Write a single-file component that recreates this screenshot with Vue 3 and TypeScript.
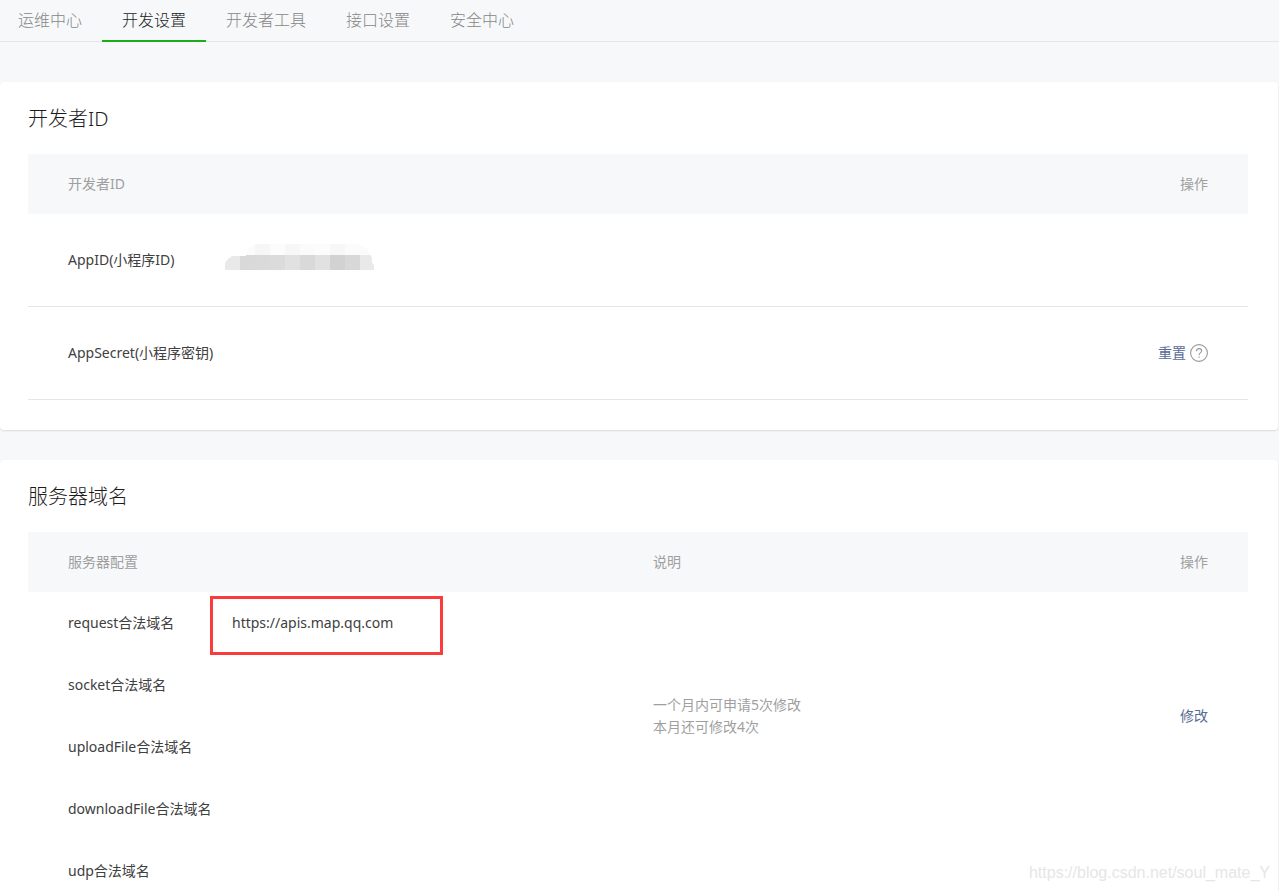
<script setup lang="ts">
import { ref } from 'vue'

interface DomainRow {
  label: string
  value: string
  marked?: boolean
}

interface MaskCell {
  x: number
  fill: string
}

const tabs: string[] = ['运维中心', '开发设置', '开发者工具', '接口设置', '安全中心']
const activeTab = ref<string>('开发设置')

const domains: DomainRow[] = [
  { label: 'request合法域名', value: 'https://apis.map.qq.com', marked: true },
  { label: 'socket合法域名', value: '' },
  { label: 'uploadFile合法域名', value: '' },
  { label: 'downloadFile合法域名', value: '' },
  { label: 'udp合法域名', value: '' },
]

const NOTE_SPAN = 4

const upperCells: MaskCell[] = [
  '#fbfbfb', '#f6f6f6', '#fcfcfc', '#f7f7f7', '#fbfbfb', '#fcfcfc', '#f7f7f7', '#fbfbfb', '#fbfbfb',
].map((fill, i) => ({ x: 15 + i * 15, fill }))

const lowerCells: MaskCell[] = [
  '#e9e9e9', '#d9d9d9', '#dadada', '#dbdbdb', '#e1e1e1', '#d9d9d9', '#e1e1e1', '#d2d2d2', '#d8d8d8', '#e9e9e9',
].map((fill, i) => ({ x: i * 15, fill }))
</script>

<template>
  <div class="page">
    <nav class="tabs">
      <a
        v-for="tab in tabs"
        :key="tab"
        href="#"
        class="tab"
        :class="{ active: tab === activeTab }"
        @click.prevent="activeTab = tab"
      >{{ tab }}</a>
    </nav>

    <main class="content">
      <section class="card">
        <h2 class="title">开发者ID</h2>
        <table class="grid ids">
          <colgroup>
            <col class="c-id" />
            <col />
            <col class="c-op" />
          </colgroup>
          <thead>
            <tr>
              <th colspan="2">开发者ID</th>
              <th class="op">操作</th>
            </tr>
          </thead>
          <tbody>
            <tr>
              <td>AppID(小程序ID)</td>
              <td class="value">
                <svg class="mask" width="149" height="26" viewBox="0 0 149 26" aria-hidden="true">
                  <defs>
                    <clipPath id="mask-shape">
                      <path d="M0 26V19L3 15L7 12H21V9L24 4L30 0H134L141 4L145 9L147 15V19L149 21V26H2Z" />
                    </clipPath>
                  </defs>
                  <g clip-path="url(#mask-shape)" shape-rendering="crispEdges">
                    <rect v-for="c in upperCells" :key="c.x" :x="c.x" y="0" width="15" height="11" :fill="c.fill" />
                    <rect v-for="c in lowerCells" :key="c.x" :x="c.x" y="11" width="15" height="15" :fill="c.fill" />
                  </g>
                </svg>
              </td>
              <td class="op"></td>
            </tr>
            <tr>
              <td colspan="2">AppSecret(小程序密钥)</td>
              <td class="op">
                <div class="actions">
                  <a href="#" class="link">重置</a>
                  <button type="button" class="help" aria-label="帮助">
                    <svg width="18" height="18" viewBox="0 0 18 18" fill="none" stroke="#9a9a9a">
                      <circle cx="9" cy="9" r="8.4" stroke-width="1.1" />
                      <path d="M6.5 7.2C6.5 5.6 7.5 4.6 9.1 4.6S11.6 5.6 11.6 6.9C11.6 8.7 9.1 8.8 9.1 11.3" stroke-width="1.1" />
                      <path d="M9.1 12.5V13.8" stroke-width="1.2" />
                    </svg>
                  </button>
                </div>
              </td>
            </tr>
          </tbody>
        </table>
      </section>

      <section class="card">
        <h2 class="title">服务器域名</h2>
        <table class="grid domains">
          <colgroup>
            <col class="c-name" />
            <col class="c-url" />
            <col />
            <col class="c-op" />
          </colgroup>
          <thead>
            <tr>
              <th colspan="2">服务器配置</th>
              <th class="note">说明</th>
              <th class="op">操作</th>
            </tr>
          </thead>
          <tbody>
            <tr v-for="(row, i) in domains" :key="row.label">
              <td>{{ row.label }}</td>
              <td class="value" :class="{ marked: row.marked }">{{ row.value }}</td>
              <td v-if="i === 0" class="note" :rowspan="NOTE_SPAN">一个月内可申请5次修改<br />本月还可修改4次</td>
              <td v-if="i === 0" class="op" :rowspan="NOTE_SPAN"><a href="#" class="link">修改</a></td>
            </tr>
          </tbody>
        </table>
      </section>
    </main>

    <div class="watermark">https://blog.csdn.net/soul_mate_Y</div>
  </div>
</template>

<style>
body {
  margin: 0;
  background: #f6f8f9;
}
</style>

<style scoped>
.page {
  position: relative;
  height: 100vh;
  overflow: hidden;
  box-sizing: border-box;
  background: #f6f8fa;
  color: #404040;
  font-family: 'Noto Sans', 'Noto Sans CJK SC', sans-serif;
  font-size: 14px;
  font-weight: 400;
  line-height: 22px;
}

.tabs {
  display: flex;
  height: 41px;
  border-bottom: 1px solid #e4e6e9;
}

.tab {
  height: 40px;
  padding: 0 20px;
  border-bottom: 2px solid transparent;
  color: #868686;
  font-size: 16px;
  font-weight: 300;
  line-height: 40px;
  text-decoration: none;
  white-space: nowrap;
}

.tab:first-child {
  padding-left: 18px;
}

.tab.active {
  border-bottom-color: #1aad19;
  color: #1c1c1c;
}

.content {
  display: flex;
  flex-direction: column;
  gap: 30px;
  padding: 40px 1px 30px 0;
}

.card {
  padding: 20px 30px 30px 28px;
  border-radius: 4px;
  background: #fff;
  box-shadow: 0 1px 2px rgba(0, 0, 0, 0.12);
}

.title {
  margin: 0 0 18px;
  color: #1c1c1c;
  font-size: 20px;
  font-weight: 300;
  line-height: 34px;
}

.grid {
  width: 100%;
  table-layout: fixed;
  border-collapse: separate;
  border-spacing: 0;
}

.c-id {
  width: 197px;
}

.c-name {
  width: 204px;
}

.c-url {
  width: 421px;
}

.c-op {
  width: 160px;
}

th,
td {
  padding: 0 0 0 40px;
  font-weight: 400;
  text-align: left;
  vertical-align: middle;
}

th {
  height: 60px;
  background: #f6f8fa;
  color: #9f9f9f;
}

th.op,
td.op {
  padding: 0 40px 0 0;
  text-align: right;
}

th.note,
td.note {
  padding: 0;
  color: #9f9f9f;
}

td.value {
  padding: 0;
}

.ids td {
  height: 92px;
  border-bottom: 1px solid #e4e6e9;
}

.domains td {
  height: 62px;
}

.mask {
  display: block;
  margin-bottom: 6px;
}

.actions {
  display: flex;
  align-items: center;
  justify-content: flex-end;
  gap: 4px;
}

.link {
  color: #576b95;
  text-decoration: none;
}

.help {
  display: block;
  width: 18px;
  height: 18px;
  padding: 0;
  border: 0;
  background: none;
  cursor: pointer;
}

.help svg {
  display: block;
}

.marked {
  position: relative;
}

.marked::after {
  content: '';
  position: absolute;
  top: 4px;
  left: -22px;
  width: 227px;
  height: 53px;
  border: 3px solid #fa3c3c;
}

.watermark {
  position: absolute;
  right: 9px;
  bottom: 8px;
  color: #e6e6e6;
  font-family: 'Liberation Sans', Arial, sans-serif;
  font-size: 16px;
  font-weight: 400;
  line-height: 20px;
}
</style>
